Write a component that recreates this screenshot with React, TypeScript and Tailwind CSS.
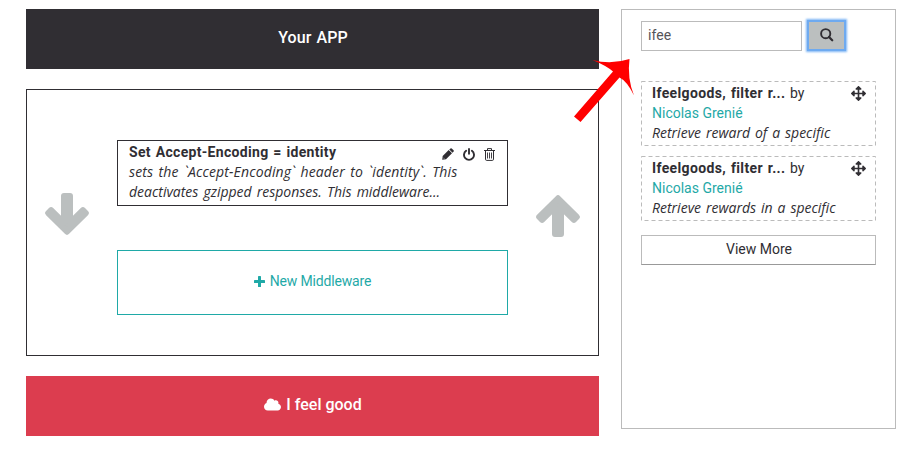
import { FaArrowsAlt, FaCloud } from "react-icons/fa";

function BigArrow({ down = false }: { down?: boolean }) {
  return (
    <svg width="44" height="42" viewBox="0 0 44 42" className={down ? "rotate-180" : ""}>
      <path
        d="M22 3.3 3.2 22 6.1 24.9 19 12.2V39H25V12.2L37.9 24.9 40.8 22Z"
        fill="#bbbfbf"
        stroke="#bbbfbf"
        strokeWidth="6"
        strokeLinejoin="round"
      />
    </svg>
  );
}

function SearchIcon() {
  return (
    <svg width="14" height="14" viewBox="0 0 14 14" fill="none" stroke="#302e33">
      <circle cx="5.7" cy="5.7" r="4.6" strokeWidth="1.9" />
      <path d="M9 9 12.2 12.2" strokeWidth="2.3" strokeLinecap="round" />
    </svg>
  );
}

function PencilIcon() {
  return (
    <svg width="12" height="12" viewBox="0 0 12 12" fill="#302e33">
      <path d="M0.2 11.8 0.7 8 6.7 2 10 5.3 4 11.3Z" />
      <path d="M7.3 1.5 8.5 0.4Q9.1 0 9.7 0.4L11.6 2.3Q12 2.9 11.6 3.5L10.5 4.7Z" />
      <path d="M1.3 9.7 2.4 10.8" stroke="#ffffff" strokeWidth="0.5" />
    </svg>
  );
}

function PowerIcon() {
  return (
    <svg width="12" height="13" viewBox="0 0 12 13" fill="none" stroke="#302e33" strokeLinecap="round">
      <path d="M3.1 2.8A5 5 0 1 0 8.9 2.8" strokeWidth="1.9" />
      <path d="M6 1V5.8" strokeWidth="1.9" />
    </svg>
  );
}

function TrashIcon() {
  return (
    <svg width="11" height="13" viewBox="0 0 11 13" fill="none" stroke="#302e33">
      <path d="M0 2.5H11M3.5 2.5V0.6H7.5V2.5M1.5 2.5V11.2Q1.5 12.4 2.6 12.4H8.4Q9.5 12.4 9.5 11.2V2.5" />
      <path d="M3.5 4.5V10.5M5.5 4.5V10.5M7.5 4.5V10.5" strokeWidth="0.9" />
    </svg>
  );
}

function PlusIcon() {
  return (
    <svg width="11" height="11" viewBox="0 0 11 11" fill="#1fa9a7">
      <rect x="4" width="3" height="11" rx="0.6" />
      <rect y="4" width="11" height="3" rx="0.6" />
    </svg>
  );
}

function Result({ text }: { text: string }) {
  return (
    <div className="relative h-[65px] pl-[11px] pt-[2px] leading-5">
      <svg className="absolute inset-0" width="235" height="65" fill="none">
        <rect x="0.5" y="0.5" width="234" height="64" stroke="#bbbbbb" strokeDasharray="4 3" />
      </svg>
      <div className="flex justify-between pr-[10px]">
        <div className="whitespace-nowrap [word-spacing:1px]">
          <b className="tracking-[0.36px]">Ifeelgoods, filter r...</b> by
        </div>
        <FaArrowsAlt size={15} className="mt-[3px]" />
      </div>
      <div className="text-[#1fa9a7]">Nicolas Grenié</div>
      <div className="whitespace-nowrap font-['Open_Sans',sans-serif] text-[14px] italic [word-spacing:1.3px]">{text}</div>
    </div>
  );
}

export default function App() {
  return (
    <div className="relative flex h-[462px] w-[918px] items-start gap-[22px] bg-white pl-[26px] pt-[9px] font-[Roboto,sans-serif] text-[14px] text-[#302e33]">
      <main className="w-[573px]">
        <header className="flex h-[60px] items-center justify-center bg-[#302e33] pb-[3px] pl-px text-[16px] font-medium tracking-[0.1px] text-white [word-spacing:1px]">
          Your APP
        </header>
        <section className="mt-5 flex h-[267px] justify-between border border-[#302e33] pl-[18px] pr-[18px]">
          <div className="mt-[103px]"><BigArrow down /></div>
          <div className="mt-[50px] w-[391px]">
            <article className="h-[66px] border border-[#302e33] pl-[11px] pt-px leading-5">
              <div className="flex justify-between pr-3">
                <b className="tracking-[0.32px] [word-spacing:1px]">Set Accept-Encoding = identity</b>
                <div className="flex gap-[9px] pt-[6px]">
                  <PencilIcon />
                  <PowerIcon />
                  <TrashIcon />
                </div>
              </div>
              <div className="whitespace-nowrap font-['Open_Sans',sans-serif] text-[14px] italic [word-spacing:1.5px]">
                <div className="tracking-[0.15px]">sets the `Accept-Encoding` header to `identity`. This</div>
                <div className="tracking-[-0.01px]">deactivates gzipped responses. This middleware...</div>
              </div>
            </article>
            <button className="mt-[44px] flex h-[65px] w-full items-center justify-center gap-[5px] border border-[#1fa9a7] pb-[3px] tracking-[-0.16px] text-[#1fa9a7]">
              <PlusIcon />
              New Middleware
            </button>
          </div>
          <div className="mt-[105px]"><BigArrow /></div>
        </section>
        <footer className="mt-5 flex h-[60px] items-center justify-center gap-[5px] bg-[#dc3d4f] pb-[3px] pl-px text-[16px] font-medium text-white">
          <FaCloud size={17} />
          I feel good
        </footer>
      </main>
      <aside className="h-[420px] w-[275px] border border-[#bbbbbb] px-[19px] pt-[11px]">
        <div className="flex gap-[5px]">
          <div className="flex h-[30px] w-[161px] items-center border border-[#bbbbbb] pb-px pl-[6px] text-[#555459] tracking-[0.1px]">ifee</div>
          <button className="-mt-px flex h-[31px] w-[39px] items-center justify-center border-2 border-[#6eaaf0] bg-[#bbbfbf] pb-px shadow-[0_0_2px_1px_#7db5f5]">
            <SearchIcon />
          </button>
        </div>
        <div className="mt-[30px] flex flex-col gap-[10px]">
          <Result text="Retrieve reward of a specific" />
          <Result text="Retrieve rewards in a specific" />
        </div>
        <button className="mt-[14px] flex h-[30px] w-full items-center justify-center border border-[#bbbbbb] border-b-[#999999] pb-[2px] pl-px">
          View More
        </button>
      </aside>
      <svg className="absolute left-[570px] top-[55px]" width="70" height="70" viewBox="570 55 70 70">
        <path d="M592.5 60Q611 65 629.5 59Q627 78 634 95.500Q627 81 619.500 77.500L580.500 122L574 116.500L613 71.500Q607 66 592.500 60Z" fill="#ff0000" />
      </svg>
    </div>
  );
}
